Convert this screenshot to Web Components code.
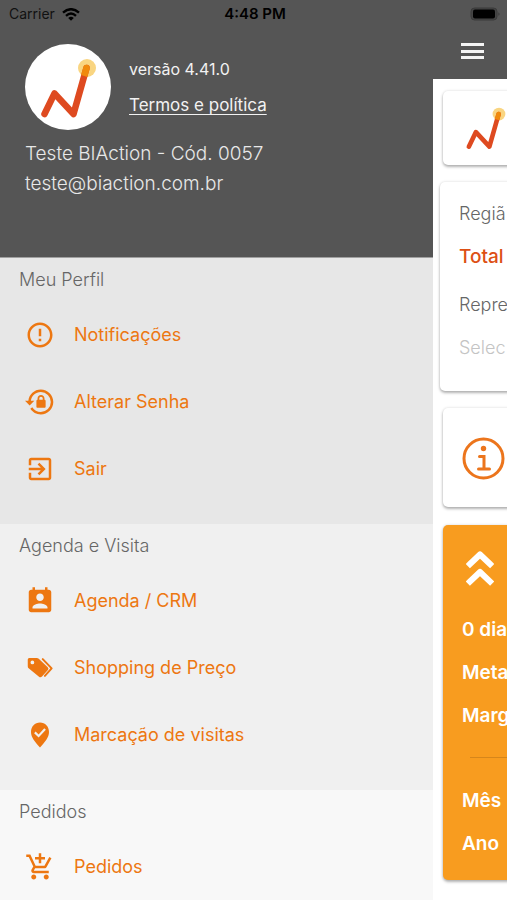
<!DOCTYPE html>
<html lang="pt-BR">
<head>
<meta charset="utf-8">
<meta name="viewport" content="width=device-width, initial-scale=1">
<title>BIAction</title>
<style>
  body { margin: 0; background: #fff; font-family: Inter, "Liberation Sans", sans-serif; }
</style>
</head>
<body>
<app-shell>
  <status-bar slot="status"></status-bar>
  <side-drawer slot="drawer">
    <user-header slot="header" version="versão 4.41.0" name="Teste BIAction - Cód. 0057" email="teste@biaction.com.br"></user-header>
    <menu-section label="Meu Perfil" style="--section-bg:#e7e7e7">
      <menu-item icon="alert">Notificações</menu-item>
      <menu-item icon="lock">Alterar Senha</menu-item>
      <menu-item icon="exit">Sair</menu-item>
    </menu-section>
    <menu-section label="Agenda e Visita" style="--section-bg:#f0f0f0">
      <menu-item icon="contact">Agenda / CRM</menu-item>
      <menu-item icon="tags">Shopping de Preço</menu-item>
      <menu-item icon="pin">Marcação de visitas</menu-item>
    </menu-section>
    <menu-section label="Pedidos" style="--section-bg:#f8f8f8">
      <menu-item icon="cart">Pedidos</menu-item>
    </menu-section>
  </side-drawer>
  <home-page slot="page"></home-page>
</app-shell>

<script>
const ICONS = {
  alert: '<path d="M11 15h2v2h-2zm0-8h2v6h-2zm.99-5C6.47 2 2 6.48 2 12s4.47 10 9.99 10C17.52 22 22 17.52 22 12S17.52 2 11.99 2zM12 20c-4.42 0-8-3.58-8-8s3.58-8 8-8 8 3.58 8 8-3.58 8-8 8z"/>',
  lock: '<path d="M12.63 2C18.16 2 22.64 6.5 22.64 12S18.16 22 12.63 22C9.12 22 6.05 20.18 4.26 17.43L5.84 16.18C7.25 18.47 9.76 20 12.64 20A8 8 0 0 0 20.64 12 8 8 0 0 0 12.64 4C8.56 4 5.2 7.06 4.71 11H7.47L3.73 14.73 0 11H2.69C3.19 5.95 7.45 2 12.63 2M15.59 10.24C16.09 10.25 16.5 10.65 16.5 11.16V15.77C16.5 16.27 16.09 16.69 15.58 16.69H10.05C9.54 16.69 9.13 16.27 9.13 15.77V11.16C9.13 10.65 9.54 10.25 10.04 10.24V9.23C10.04 7.7 11.29 6.46 12.81 6.46 14.34 6.46 15.59 7.7 15.59 9.23V10.24M12.81 7.86C12.06 7.86 11.44 8.47 11.44 9.23V10.24H14.19V9.23C14.19 8.47 13.57 7.86 12.81 7.86Z"/>',
  exit: '<path d="M10.09 15.59L11.5 17l5-5-5-5-1.41 1.41L12.67 11H3v2h9.67l-2.58 2.59zM19 3H5c-1.11 0-2 .9-2 2v4h2V5h14v14H5v-4H3v4c0 1.1.89 2 2 2h14c1.1 0 2-.9 2-2V5c0-1.1-.9-2-2-2z"/>',
  contact: '<path d="M19 3h-1V1h-2v2H8V1H6v2H5c-1.11 0-2 .9-2 2v14c0 1.1.89 2 2 2h14c1.1 0 2-.9 2-2V5c0-1.1-.9-2-2-2zm-7 3c1.66 0 3 1.34 3 3s-1.34 3-3 3-3-1.34-3-3 1.34-3 3-3zm6 12H6v-1c0-2 4-3.1 6-3.1s6 1.1 6 3.1v1z"/>',
  tags: '<path fill-rule="evenodd" d="M3.400 4H9.400Q10.300 4 11 4.600L18.200 11.400Q19.300 12.500 18.300 13.600L13.600 18.800Q12.400 20 11.200 18.900L2.900 12.200Q2.200 11.500 2.200 10.500V5.200Q2.200 4 3.400 4ZM5.900 6A1.500 1.500 0 1 0 5.900 9 1.500 1.500 0 1 0 5.900 6Z"/><path d="M14.200 4.900 21.300 12.300 15.900 18.300" fill="none" stroke="currentColor" stroke-width="1.600" stroke-linejoin="round" stroke-linecap="round"/>',
  pin: '<path fill-rule="evenodd" d="M12 2C7.900 2 4.800 5.300 4.800 9.500 4.800 14 8 17.200 12 22 16 17.200 19.200 14 19.200 9.500 19.200 5.300 16.100 2 12 2ZM10.900 14 7.300 10.500 8.500 9.200 10.900 11.500 15.400 6.500 16.700 7.700Z"/>',
  cart: '<path d="M11 9h2V6h3V4h-3V1h-2v3H8v2h3v3zm-4 9c-1.100 0-1.990.9-1.990 2S5.900 22 7 22s2-.9 2-2-.9-2-2-2zm10 0c-1.100 0-1.990.9-1.990 2s.89 2 1.990 2 2-.9 2-2-.9-2-2-2zm-9.830-3.250l.03-.12.9-1.630h7.450c.75 0 1.410-.41 1.750-1.030l3.860-7.010L19.420 4h-.01l-1.100 2-2.760 5H8.530l-.13-.27L6.160 6l-.95-2-.94-2H1v2h2l3.600 7.590-1.350 2.450c-.16.28-.25.61-.25.96 0 1.100.9 2 2 2h12v-2H7.420c-.13 0-.25-.11-.25-.25z"/>'
};
const LOGO = `<svg viewBox="0 0 86 86" aria-hidden="true">
  <circle cx="62" cy="24" r="9" fill="#f9d581"/>
  <path d="M19.500 70 29.500 49.500 48.500 70 61.500 24" fill="none" stroke="#de4a20" stroke-width="6.500" stroke-linecap="round" stroke-linejoin="round"/>
  <path d="M59.200 32 61.500 24" fill="none" stroke="#f08a0c" stroke-width="6.500"/><circle cx="61.500" cy="24" r="3.250" fill="#f08a0c"/>
</svg>`;

function define(name, render) {
  customElements.define(name, class extends HTMLElement {
    connectedCallback() {
      if (this.shadowRoot) return;
      this.attachShadow({ mode: 'open' }).innerHTML = render(this);
    }
  });
}

define('app-shell', () => `
  <style>
    :host { display: grid; grid-template: "status status" auto "drawer page" minmax(0, 1fr) / minmax(0, 433fr) minmax(0, 74fr);
            height: 100vh; overflow: hidden; }
    ::slotted(*) { min-width: 0; min-height: 0; }
    ::slotted([slot=status]) { grid-area: status; }
    ::slotted([slot=drawer]) { grid-area: drawer; }
    ::slotted([slot=page]) { grid-area: page; }
  </style>
  <slot name="status"></slot><slot name="drawer"></slot><slot name="page"></slot>`);

define('status-bar', () => `
  <style>
    :host { display: grid; grid-template-columns: 1fr auto 1fr; align-items: center; box-sizing: border-box;
            height: 28px; padding: 0 6px 0 9px; background: #555; color: #111; font-size: 14px; line-height: 20px; }
    .net { display: flex; align-items: center; gap: 7px; }
    time { font-size: 15px; font-weight: 600; color: #000; }
    .battery { justify-self: end; }
    svg { display: block; }
  </style>
  <span class="net">Carrier
    <svg width="18" height="13" viewBox="0 0 18 13" fill="none" stroke="#000" stroke-width="2.400" aria-hidden="true">
      <path d="M1 4.600Q9-2.200 17 4.600M4 7.800Q9 3.400 14 7.800"/><path d="M9 12.800 6.200 9.900Q9 7.700 11.800 9.900Z" fill="#000" stroke="none"/></svg>
  </span>
  <time>4:48 PM</time>
  <svg class="battery" width="31" height="14" viewBox="0 0 31 14" aria-label="Bateria" role="img">
    <rect x="1" y="1" width="26" height="12" rx="3.500" fill="#444" stroke="#3b3b3b"/>
    <rect x="3" y="2.500" width="22" height="9" rx="2" fill="#000"/><path d="M28.500 5.200q2 1.800 0 3.600z" fill="#333"/></svg>`);

define('side-drawer', () => `
  <style>
    :host { display: flex; flex-direction: column; overflow: hidden; background: #f8f8f8; }
    ::slotted(*) { flex: none; }
  </style>
  <slot name="header"></slot><slot></slot>`);

define('user-header', el => `
  <style>
    :host { display: block; padding: 16px 25px 58px; background: #555; color: #f2f2f2; border-bottom: 1px solid #a0a0a0; }
    .top { display: flex; align-items: center; gap: 18px; margin-bottom: 9px; }
    .avatar { flex: none; width: 86px; height: 86px; border-radius: 50%; background: #fff; }
    .avatar svg { display: block; }
    .meta { display: grid; gap: 16px; font-size: 16px; line-height: 20px; }
    a { color: inherit; font-size: 17px; text-underline-offset: 3px; }
    p { margin: 0; font-size: 19px; line-height: 30px; font-weight: 300; color: #e8e8e8; }
  </style>
  <div class="top"><div class="avatar">${LOGO}</div>
    <div class="meta"><span>${el.getAttribute('version')}</span><a href="#termos">Termos e política</a></div></div>
  <p>${el.getAttribute('name')}</p><p>${el.getAttribute('email')}</p>`);

define('menu-section', el => `
  <style>
    :host { display: block; padding-bottom: 22px; background: var(--section-bg); }
    h2 { margin: 0; padding: 0 19px; font-size: 18px; line-height: 43px; font-weight: 300; color: #666; }
  </style>
  <h2>${el.getAttribute('label')}</h2><nav><slot></slot></nav>`);

define('menu-item', el => `
  <style>
    :host { display: block; }
    a { display: flex; align-items: center; gap: 19px; height: 67px; padding: 0 25px; color: #ed7711;
        font-size: 18px; line-height: 24px; text-decoration: none; }
    svg { flex: none; width: 30px; height: 30px; fill: currentColor; }
  </style>
  <a href="#${el.getAttribute('icon')}"><svg viewBox="0 0 24 24" aria-hidden="true">${ICONS[el.getAttribute('icon')]}</svg><slot></slot></a>`);

define('page-card', () => `
  <style>
    :host { display: block; box-sizing: border-box; border-radius: 5px; background: #fff;
            box-shadow: 0 2px 3px rgba(0,0,0,.28), 0 0 3px rgba(0,0,0,.14); }
  </style><slot></slot>`);

define('home-page', () => `
  <style>
    :host { display: flex; flex-direction: column; overflow: hidden; background: #fff; }
    header { flex: none; height: 51px; padding: 10px 0 0 26px; box-sizing: border-box; background: #555; }
    button { display: block; padding: 0; border: 0; background: none; }
    svg { display: block; }
    main { display: grid; align-content: start; width: 200%; box-sizing: border-box; padding: 12px 0 20px 10px; white-space: nowrap; }
    .brand { height: 74px; padding: 6px 0 0 12px; margin-bottom: 17px; }
    .brand svg { width: 61px; height: 61px; }
    .filter { margin: 0 0 17px -3px; padding: 10px 19px 22px; font-size: 18px; line-height: 43px; font-weight: 300; color: #666; }
    .filter p, .goals p { margin: 0; }
    .filter .value { color: #dd4f14; font-size: 19px; font-weight: 500; margin-bottom: 5px; }
    .filter .empty { color: #c4c4c4; }
    .info { height: 99px; padding: 29px 0 0 19px; margin-bottom: 18px; }
    .goals { padding: 25px 19px 15px; background: #f89c1f; color: #fff; font-size: 19px; line-height: 43px; font-weight: 600; }
    .goals svg { margin-left: 4px; margin-bottom: 22px; }
    hr { margin: 20px 0 21px 8px; border: 0; border-top: 1px solid #d6861b; }
  </style>
  <header><button type="button" aria-label="Menu">
    <svg width="26" height="26" viewBox="0 0 26 26" stroke="#f4f4f4" stroke-width="3" aria-hidden="true"><path d="M2 6.500h23M2 13.500h23M2 19.500h23"/></svg></button></header>
  <main>
    <page-card class="brand">${LOGO}</page-card>
    <page-card class="filter"><p>Regiã</p><p class="value">Total</p><p>Repre</p><p class="empty">Selec</p></page-card>
    <page-card class="info">
      <svg width="43" height="43" viewBox="0 0 43 43" fill="none" stroke="#ec751c" stroke-width="3" aria-hidden="true">
        <circle cx="21.500" cy="21.500" r="19.500"/><path d="M17.500 19.500h4.500v12M16.500 32h11" stroke-linecap="round"/><circle cx="21.500" cy="11.500" r="2.700" fill="#ec751c" stroke="none"/></svg>
    </page-card>
    <page-card class="goals">
      <svg width="28" height="36" viewBox="0 0 28 36" fill="none" stroke="#fff" stroke-width="6" stroke-linejoin="round" stroke-linecap="square" aria-hidden="true"><path d="M4 14 14 4.500 24 14M4 31.500 14 22 24 31.500"/></svg>
      <p>0 dia</p><p>Meta</p><p>Marg</p><hr><p>Mês</p><p>Ano</p>
    </page-card>
  </main>`);
</script>
</body>
</html>
